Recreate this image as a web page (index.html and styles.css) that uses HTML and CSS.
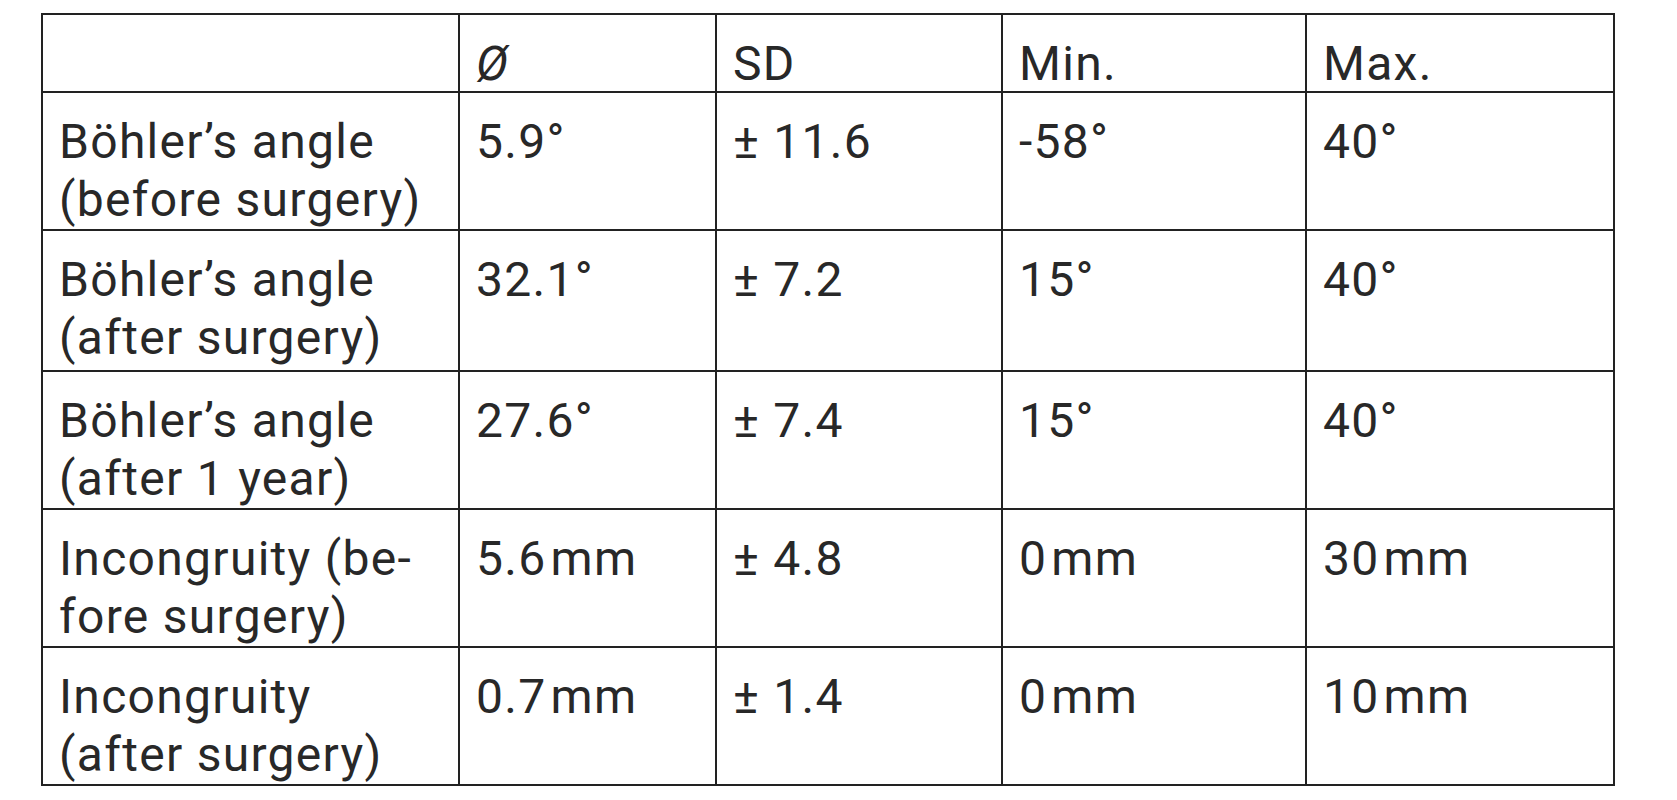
FILE: index.html
```html
<!DOCTYPE html>
<html lang="en">
<head>
<meta charset="utf-8">
<title>Böhler's angle and incongruity</title>
<link rel="stylesheet" href="styles.css">
</head>
<body>
<div class="page">
  <table class="stats">
    <colgroup>
      <col class="c-label">
      <col class="c-mean">
      <col class="c-sd">
      <col class="c-min">
      <col class="c-max">
    </colgroup>
    <thead>
      <tr class="head">
        <th></th>
        <th><span class="diam">Ø</span></th>
        <th>SD</th>
        <th>Min.</th>
        <th>Max.</th>
      </tr>
    </thead>
    <tbody>
      <tr class="r1">
        <td>Böhler’s angle<br>(before surgery)</td>
        <td>5.9°</td>
        <td>± 11.6</td>
        <td>-58°</td>
        <td>40°</td>
      </tr>
      <tr class="r2">
        <td>Böhler’s angle<br>(after surgery)</td>
        <td>32.1°</td>
        <td>± 7.2</td>
        <td>15°</td>
        <td>40°</td>
      </tr>
      <tr class="r3">
        <td>Böhler’s angle<br>(after 1 year)</td>
        <td>27.6°</td>
        <td>± 7.4</td>
        <td>15°</td>
        <td>40°</td>
      </tr>
      <tr class="r4">
        <td>Incongruity (be-<br>fore surgery)</td>
        <td>5.6<span class="unit">mm</span></td>
        <td>± 4.8</td>
        <td>0<span class="unit">mm</span></td>
        <td>30<span class="unit">mm</span></td>
      </tr>
      <tr class="r5">
        <td>Incongruity<br>(after surgery)</td>
        <td>0.7<span class="unit">mm</span></td>
        <td>± 1.4</td>
        <td>0<span class="unit">mm</span></td>
        <td>10<span class="unit">mm</span></td>
      </tr>
    </tbody>
  </table>
</div>
</body>
</html>
```

FILE: styles.css
```css
html, body {
  margin: 0;
  padding: 0;
  background: #ffffff;
}

.page {
  padding: 13px 0 0 41px;
}

.stats {
  border-collapse: collapse;
  table-layout: fixed;
  width: 1572px;
  font-family: Roboto, "Liberation Sans", Arial, sans-serif;
  font-size: 48px;
  line-height: 58px;
  letter-spacing: 1.3px;
  color: #282828;
}

.c-label { width: 417px; }
.c-mean  { width: 257px; }
.c-sd    { width: 286px; }
.c-min   { width: 304px; }
.c-max   { width: 308px; }

.stats th,
.stats td {
  border: 2px solid #222222;
  padding: 20px 0 0 16px;
  vertical-align: top;
  text-align: left;
  font-weight: 400;
  white-space: nowrap;
}

.stats th {
  padding-top: 24px;
  line-height: 50px;
}

.head  { height: 78px; }
.r1    { height: 138px; }
.r2    { height: 141px; }
.r3    { height: 138px; }
.r4    { height: 138px; }
.r5    { height: 137px; }

.diam {
  font-style: italic;
}

.unit {
  margin-left: 4px;
}
```
